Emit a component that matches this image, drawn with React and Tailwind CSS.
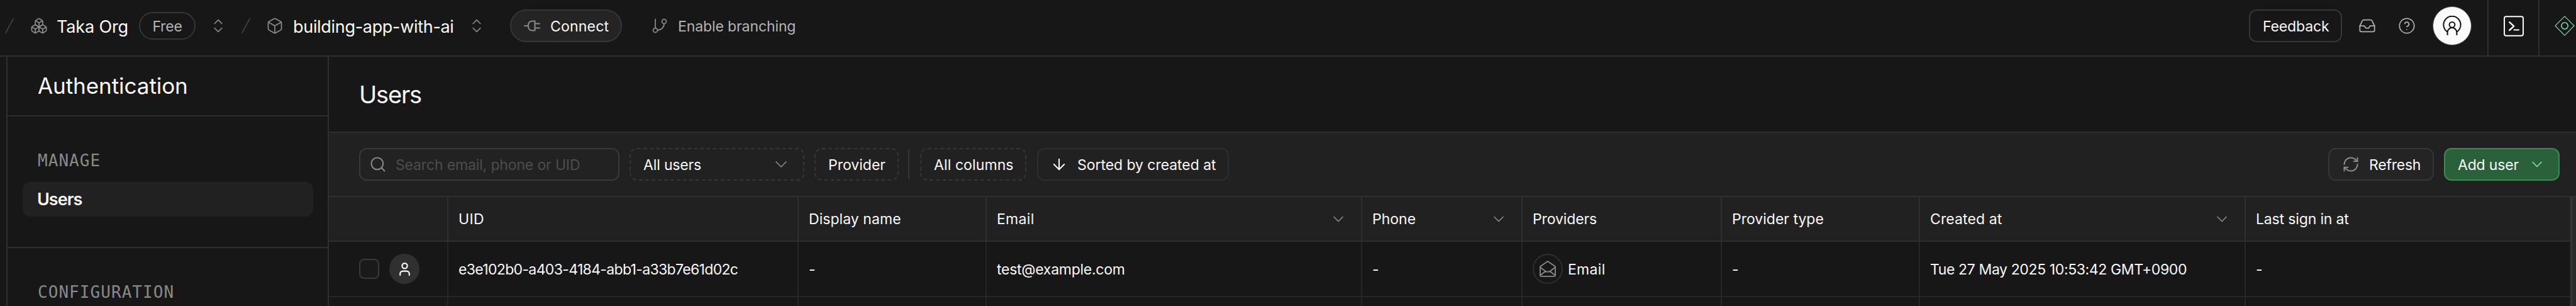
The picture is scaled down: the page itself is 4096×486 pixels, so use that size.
import React from 'react';
import {
  ArrowDown,
  Box,
  Boxes,
  ChevronDown,
  ChevronsUpDown,
  GitBranch,
  HelpCircle,
  Inbox,
  RefreshCw,
  Search,
  User,
} from 'lucide-react';

const COLS = 'grid grid-cols-[190px_557px_299px_597px_255px_317px_315px_518px_517px]';

function Slash({ className }) {
  return (
    <svg className={className} width="14" height="24" viewBox="0 0 14 24" fill="none" stroke="currentColor" strokeWidth="1.4" strokeLinecap="round">
      <path d="M13 0.8 L1 23.2" />
    </svg>
  );
}

function PlugIcon() {
  return (
    <svg width="26" height="18" viewBox="0 0 26 18" fill="none" stroke="currentColor" strokeWidth="2" strokeLinecap="round" strokeLinejoin="round">
      <path d="M1 9h5" />
      <path d="M17.5 1.5v15H13a6 6 0 0 1-6-6v-3a6 6 0 0 1 6-6z" />
      <path d="M18 5.5h7M18 12.5h7" />
    </svg>
  );
}

function AvatarIcon() {
  return (
    <svg width="30" height="32" viewBox="0 0 30 32" fill="none" stroke="#111111" strokeWidth="2">
      <path d="M7.5 25.6A13.6 13.6 0 1 1 22.5 25.6" />
      <circle cx="15" cy="14.3" r="4.4" />
      <path d="M7.6 31v-4.6a7.4 7.4 0 0 1 14.8 0V31" />
    </svg>
  );
}

function TerminalIcon() {
  return (
    <svg width="32" height="33" viewBox="0 0 32 33" fill="none" stroke="#fafafa" strokeWidth="2" strokeLinecap="round" strokeLinejoin="round">
      <rect x="1" y="1.2" width="30" height="30.6" rx="3" />
      <path strokeWidth="2.4" d="M9.2 10.2L16.2 16.6L9.2 23" />
      <path d="M16.5 22.4h7.4" />
    </svg>
  );
}

function DiamondIcon() {
  return (
    <svg width="32" height="32" viewBox="0 0 32 32" fill="none" stroke="#7fd6a9">
      <path strokeWidth="1.2" d="M16 0.9L31.1 16L16 31.1L0.9 16z" />
      <circle cx="16" cy="16" r="5.2" strokeWidth="1.6" />
    </svg>
  );
}

function MailOpenIcon() {
  return (
    <svg width="26" height="26" viewBox="0 0 26 26" fill="none" stroke="#8a8a8a" strokeWidth="1.8" strokeLinecap="round" strokeLinejoin="round">
      <path d="M1 9.2L13 1l12 8.2v14.2a1.5 1.5 0 0 1-1.5 1.5h-21A1.5 1.5 0 0 1 1 23.4z" />
      <path d="M1 10.5l9.6 7.2h4.8L25 10.5M1.2 23l8.6-6.2M24.8 23l-8.6-6.2" />
    </svg>
  );
}

function TopBar() {
  return (
    <header className="flex h-[90px] shrink-0 border-b-2 border-[#2e2e2e]">
      <div className="flex items-center pb-[6px] text-[#8a8a8a]">
        <Slash className="ml-[8px] shrink-0 text-[#4a4a4a]" />
        <Boxes size={28} strokeWidth={1.5} className="ml-[26px] shrink-0" />
        <span className="ml-[14px] w-[131px] pt-[2px] text-[27px] tracking-[-0.14px] text-[#fafafa]">Taka Org</span>
        <span className="flex h-[44px] w-[90px] items-center justify-center rounded-full border-2 border-[#363636] pt-[2px] text-[23px] tracking-[-0.2px] text-[#b4b4b4]">
          Free
        </span>
        <ChevronsUpDown size={28} strokeWidth={1.5} className="ml-[22px] shrink-0" />
        <Slash className="ml-[23px] shrink-0 text-[#4a4a4a]" />
        <Box size={28} strokeWidth={1.5} className="ml-[25px] shrink-0" />
        <span className="ml-[15px] w-[278px] pt-[2px] text-[27px] tracking-[-0.31px] text-[#fafafa]">building-app-with-ai</span>
        <ChevronsUpDown size={28} strokeWidth={1.5} className="shrink-0" />
        <button className="ml-[39px] flex h-[52px] w-[178px] items-center rounded-full border-2 border-[#363636] bg-[#242424] pl-[20px]">
          <PlugIcon />
          <span className="ml-[16px] pt-[2px] text-[23px] tracking-[0.2px] text-[#fafafa]">Connect</span>
        </button>
        <GitBranch size={28} strokeWidth={1.5} className="ml-[46px] shrink-0" />
        <span className="ml-[15px] pt-[2px] text-[23px] tracking-[-0.11px] text-[#b4b4b4]">Enable branching</span>
      </div>

      <div className="ml-auto flex">
        <div className="flex items-center pb-[6px] text-[#b0b0b0]">
          <button className="flex h-[52px] w-[148px] items-center rounded-xl border-2 border-[#363636] pt-[2px] pl-[20px] text-[23px] tracking-[-0.13px] text-[#fafafa]">
            Feedback
          </button>
          <Inbox size={28} strokeWidth={1.5} className="ml-[26px]" />
          <HelpCircle size={28} strokeWidth={1.5} className="ml-[35px]" />
          <span className="ml-[27px] flex size-[62px] items-center justify-center rounded-full border border-[#4a4a4a] bg-[#fafafa]">
            <AvatarIcon />
          </span>
        </div>
        <div className="ml-[25px] flex w-[81px] items-center justify-center border-l-2 border-[#2e2e2e] pb-[6px]">
          <TerminalIcon />
        </div>
        <div className="flex w-[60px] items-center border-l-2 border-[#2e2e2e] pb-[6px] pl-[24px]">
          <DiamondIcon />
        </div>
      </div>
    </header>
  );
}

function Sidebar() {
  return (
    <aside className="ml-[10px] w-[513px] shrink-0 border-x-2 border-[#2e2e2e]">
      <div className="flex h-[95px] items-center border-b-2 border-[#2e2e2e] pl-[48px]">
        <h1 className="text-[35px] tracking-[-0.06px] text-[#fafafa]">Authentication</h1>
      </div>
      <section className="h-[209px] border-b-2 border-[#2e2e2e] pt-[56px]">
        <h2 className="pl-[48px] font-['DejaVu_Sans_Mono',monospace] text-[26px] leading-[28px] tracking-[1.05px] text-[#898989]">
          MANAGE
        </h2>
        <a className="mt-[20px] mr-[23px] ml-[24px] flex h-[55px] items-center rounded-xl bg-[#212121] pl-[23px] text-[27px] font-semibold tracking-[-1px] text-[#fafafa]">
          Users
        </a>
      </section>
      <section className="pt-[56px]">
        <h2 className="pl-[48px] font-['DejaVu_Sans_Mono',monospace] text-[26px] leading-[28px] tracking-[1.05px] text-[#898989]">
          CONFIGURATION
        </h2>
      </section>
    </aside>
  );
}

function Toolbar() {
  return (
    <div className="flex h-[104px] shrink-0 items-center border-y-2 border-[#2e2e2e] bg-[#212121] pr-[26px] pl-[48px] text-[23px] text-[#fafafa]">
      <div className="flex h-[52px] w-[414px] items-center rounded-xl border-2 border-[#393939] bg-[#222222] pl-[14px]">
        <Search size={28} strokeWidth={1.75} className="text-[#8a8a8a]" />
        <span className="ml-[14px] pt-[2px] tracking-[-0.15px] text-[#4d4d4d]">Search email, phone or UID</span>
      </div>
      <button className="ml-4 flex h-[52px] w-[278px] items-center justify-between rounded-xl border-2 border-dashed border-[#363636] pr-[19px] pl-[20px]">
        <span className="pt-[2px] tracking-[-0.15px]">All users</span>
        <ChevronDown size={32} strokeWidth={1.3} className="text-[#8a8a8a]" />
      </button>
      <button className="ml-4 flex h-[52px] w-[134px] items-center rounded-xl border-2 border-dashed border-[#363636] pt-[2px] pl-[20px]">
        Provider
      </button>
      <span className="ml-[15px] h-[48px] w-[2px] bg-[#363636]" />
      <button className="ml-[17px] flex h-[52px] w-[169px] items-center rounded-xl border-2 border-dashed border-[#363636] pt-[2px] pl-[20px] tracking-[0.1px]">
        All columns
      </button>
      <button className="ml-[17px] flex h-[52px] w-[305px] items-center rounded-xl border-2 border-[#2e2e2e] pl-[19px]">
        <ArrowDown size={28} strokeWidth={1.75} />
        <span className="ml-[15px] pt-[2px] tracking-[-0.05px]">Sorted by created at</span>
      </button>

      <button className="ml-auto flex h-[52px] w-[168px] items-center rounded-xl border-2 border-[#363636] bg-[#242424] pl-[20px]">
        <RefreshCw size={28} strokeWidth={1.75} className="text-[#8a8a8a]" />
        <span className="ml-[15px] pt-[2px] tracking-[-0.23px]">Refresh</span>
      </button>
      <button className="ml-4 flex h-[52px] w-[184px] items-center justify-between rounded-xl border-2 border-[#3f8856] bg-[#2a613a] pr-[20px] pl-[20px]">
        <span className="pt-[2px] tracking-[-0.17px]">Add user</span>
        <ChevronDown size={28} strokeWidth={1.5} className="text-[#85e0ae]" />
      </button>
    </div>
  );
}

function HeadCell({ children, menu }) {
  return (
    <div className="flex items-center justify-between border-r-2 border-[#2e2e2e] pt-px pr-[22px] pl-[16px]">
      {children}
      {menu && <ChevronDown size={28} strokeWidth={1.5} className="text-[#8a8a8a]" />}
    </div>
  );
}

function Cell({ children }) {
  return <div className="flex items-center border-r-2 border-[#262626] pl-[16px] whitespace-nowrap">{children}</div>;
}

function UsersTable() {
  return (
    <div className="flex min-h-0 flex-1 text-[23px] text-[#fafafa]">
      <div className="flex w-[3565px] shrink-0 flex-col">
        <div className={`${COLS} h-[71px] shrink-0 border-b-2 border-[#2e2e2e] bg-[#212121]`}>
          <HeadCell />
          <HeadCell><span className="tracking-[0.4px]">UID</span></HeadCell>
          <HeadCell><span className="tracking-[0.05px]">Display name</span></HeadCell>
          <HeadCell menu><span className="tracking-[0.3px]">Email</span></HeadCell>
          <HeadCell menu><span>Phone</span></HeadCell>
          <HeadCell><span className="tracking-[-0.12px]">Providers</span></HeadCell>
          <HeadCell><span>Provider type</span></HeadCell>
          <HeadCell menu><span className="tracking-[0.1px]">Created at</span></HeadCell>
          <HeadCell><span className="tracking-[-0.15px]">Last sign in at</span></HeadCell>
        </div>
        <div className={`${COLS} h-[88px] shrink-0 border-b-2 border-[#262626]`}>
          <div className="flex items-center border-r-2 border-[#262626] pl-[48px]">
            <span className="size-[32px] rounded-[8px] border-2 border-[#393939] bg-[#1a1a1a]" />
            <span className="ml-4 flex size-[48px] items-center justify-center rounded-full bg-[#303030]">
              <User size={25} strokeWidth={2.1} />
            </span>
          </div>
          <Cell><span className="pt-[2px] tracking-[-0.66px]">e3e102b0-a403-4184-abb1-a33b7e61d02c</span></Cell>
          <Cell><span className="pt-[2px]">-</span></Cell>
          <Cell><span className="pt-[2px] tracking-[-0.27px]">test@example.com</span></Cell>
          <Cell><span className="pt-[2px]">-</span></Cell>
          <Cell>
            <span className="flex size-[48px] items-center justify-center rounded-full border-2 border-[#2e2e2e]">
              <MailOpenIcon />
            </span>
            <span className="ml-[8px] pt-[2px] tracking-[0.3px]">Email</span>
          </Cell>
          <Cell><span className="pt-[2px]">-</span></Cell>
          <Cell><span className="pt-[2px] tracking-[-0.38px]">Tue 27 May 2025 10:53:42 GMT+0900</span></Cell>
          <Cell><span className="pt-[2px]">-</span></Cell>
        </div>
        <div className={`${COLS} flex-1`}>
          <Cell />
          <Cell />
          <Cell />
          <Cell />
          <Cell />
          <Cell />
          <Cell />
          <Cell />
          <Cell />
        </div>
      </div>
      <div className="flex-1 border-l-2 border-[#3a3a3a] bg-[#2b2b2b]" />
    </div>
  );
}

export default function App() {
  return (
    <div className="flex h-[486px] w-[4096px] flex-col overflow-hidden bg-[#171717] font-['Inter',sans-serif] leading-none">
      <TopBar />
      <div className="flex min-h-0 flex-1">
        <Sidebar />
        <main className="flex min-w-0 flex-1 flex-col">
          <div className="flex h-[119px] shrink-0 items-center pl-[48px]">
            <h1 className="text-[38px] tracking-[-1.2px] text-[#fafafa]">Users</h1>
          </div>
          <Toolbar />
          <UsersTable />
        </main>
      </div>
    </div>
  );
}
